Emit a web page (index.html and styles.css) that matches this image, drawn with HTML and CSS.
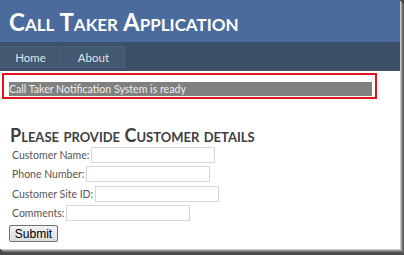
FILE: index.html
```html
<!DOCTYPE html>
<html lang="en">
<head>
  <meta charset="UTF-8" />
  <title>Call Taker Application</title>
  <link rel="stylesheet" href="styles.css">
</head>
<body>
  <div class="page">
    <div class="header">
      <h1>Call Taker Application</h1>
    </div>
    <div class="menu">
      <a class="tab" href="#">Home</a>
      <a class="tab" href="#">About</a>
    </div>

    <div class="main">
      <div class="notice">
        <span class="status">Call Taker Notification System is ready</span>
      </div>

      <h2>Please provide Customer details</h2>
      <form class="details">
        <div class="row">
          <label for="name">Customer Name:</label>
          <input type="text" id="name">
        </div>
        <div class="row">
          <label for="phone">Phone Number:</label>
          <input type="text" id="phone">
        </div>
        <div class="row">
          <label for="site">Customer Site ID:</label>
          <input type="text" id="site">
        </div>
        <div class="row">
          <label for="comments">Comments:</label>
          <input type="text" id="comments">
        </div>
        <button type="button" class="submit-btn">Submit</button>
      </form>
    </div>
  </div>
</body>
</html>
```

FILE: styles.css
```css
html, body {
  margin: 0;
  padding: 0;
  width: 404px;
  height: 255px;
  overflow: hidden;
  background: #4a4a4a;
  font-family: Lato, sans-serif;
}

.page {
  width: 400px;
  height: 249px;
  background: #fff;
  overflow: hidden;
  box-shadow: 1px 1px 0 #c8c8c8, 2px 2px 0 #9a9a9a, 3px 3px 0 #707070, 4px 4px 0 #5a5a5a;
}

.header {
  height: 42px;
  background-color: #4a6b9c;
}

h1 {
  margin: 0;
  padding: 9px 0 0 9px;
  color: #fff;
  font-size: 24px;
  line-height: 26px;
  font-weight: bold;
  font-variant: small-caps;
}

.menu {
  height: 29px;
  background-color: #3c5068;
  display: flex;
  align-items: flex-start;
  padding-top: 4px;
  box-sizing: border-box;
}

.tab {
  width: 62px;
  height: 22px;
  line-height: 22px;
  margin-right: 1px;
  box-sizing: border-box;
  text-align: center;
  background-color: #435871;
  border: 1px solid #4b6179;
  border-left: none;
  color: #dfe5ec;
  font-size: 11.5px;
  text-decoration: none;
}

.main {
  padding: 2px 0 0 2px;
}

.notice {
  width: 375px;
  height: 26px;
  box-sizing: border-box;
  border: 2px solid #e3141b;
  padding: 7px 3px 0 5px;
}

.status {
  display: block;
  height: 14px;
  line-height: 14px;
  background-color: #808080;
  color: #eeeeee;
  font-size: 10.6px;
  white-space: nowrap;
}

h2 {
  margin: 26px 0 0 8px;
  color: #404040;
  font-size: 18px;
  line-height: 20px;
  font-weight: bold;
  font-variant: small-caps;
}

.details {
  padding-left: 10px;
}

.row {
  display: flex;
  align-items: center;
  gap: 2px;
  height: 19.5px;
  color: #555;
  font-size: 10.5px;
}

.row input {
  width: 124px;
  height: 16px;
  box-sizing: border-box;
  border: 1px solid #d4d8dc;
  padding: 0 2px;
  margin: 0;
}

.submit-btn {
  display: block;
  margin: 2px 0 0 -3px;
  width: 49px;
  height: 17px;
  padding: 0;
  font-family: 'Liberation Sans', Arial, sans-serif;
  font-size: 12px;
  color: #000;
  background: linear-gradient(#f4f4f4, #dcdcdc);
  border: 1px solid #707070;
  border-radius: 2px;
}
```
